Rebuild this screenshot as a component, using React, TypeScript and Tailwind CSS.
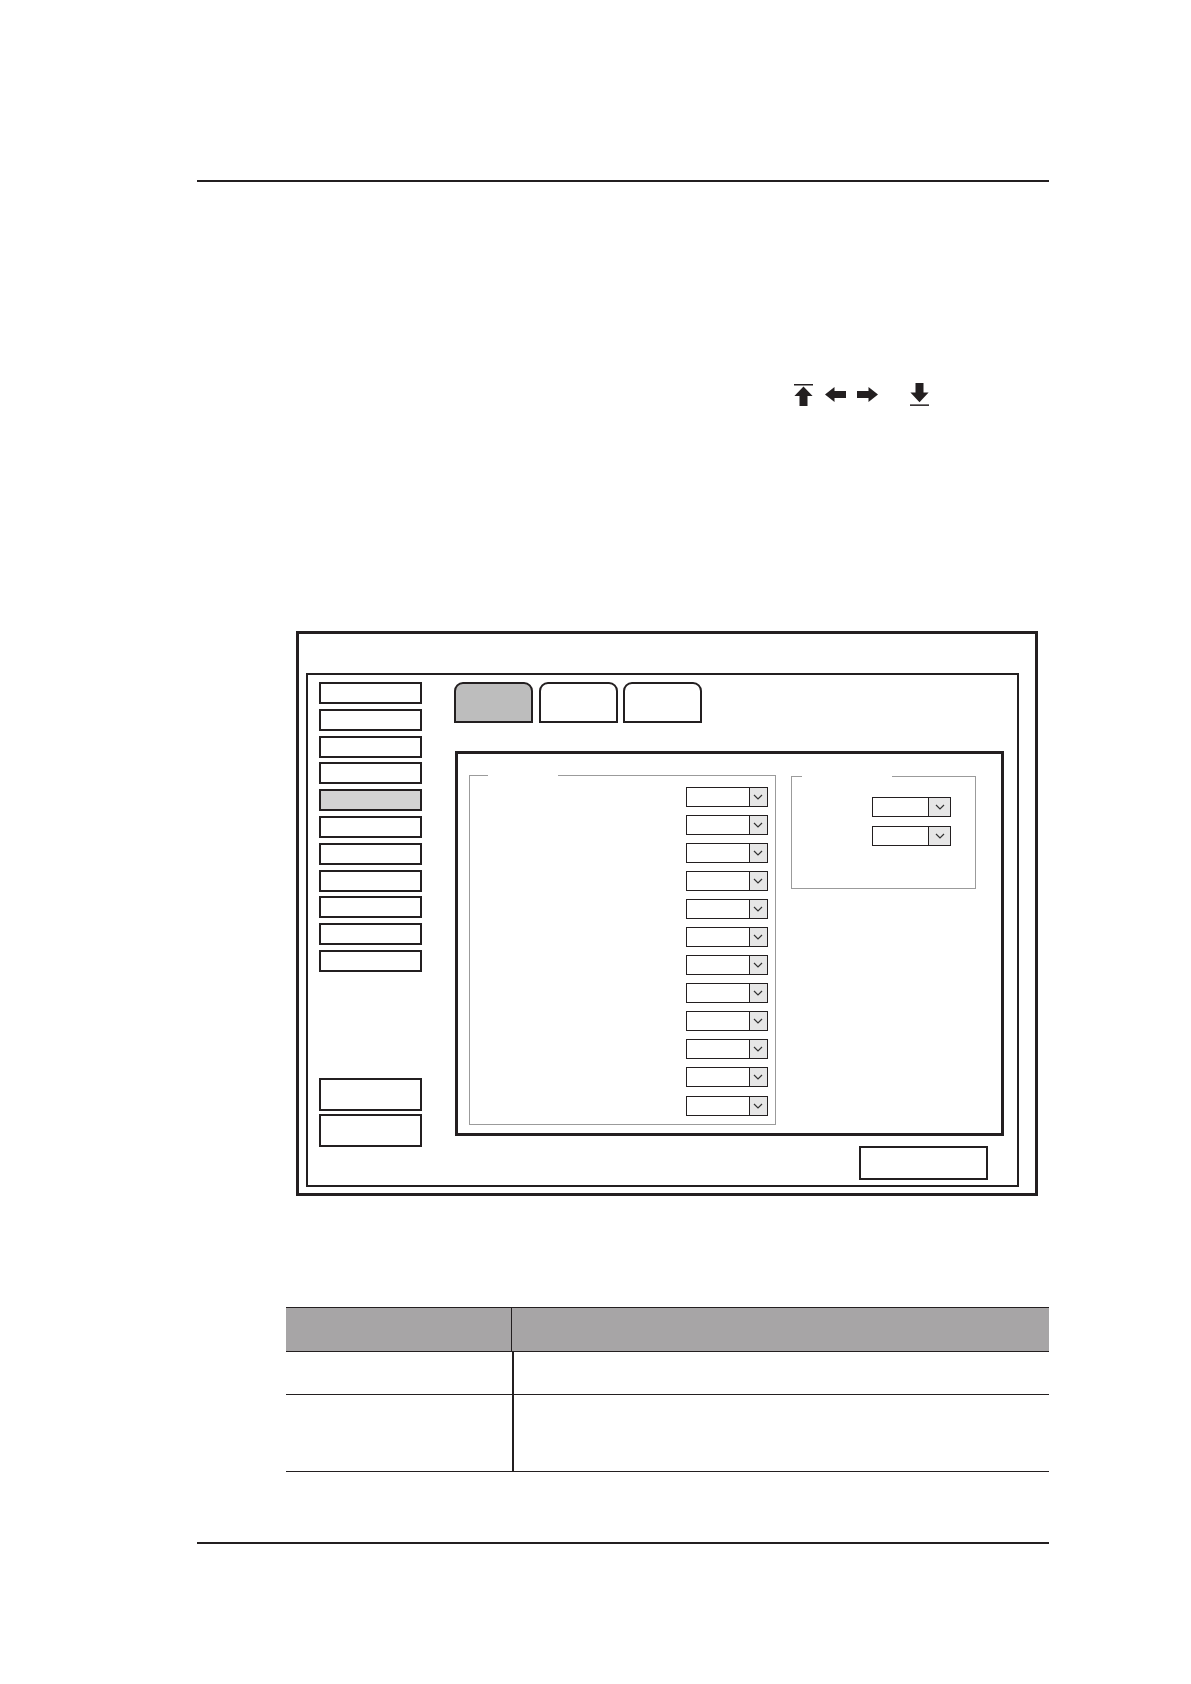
import React from 'react'

const ink = 'border-[#231f20]'

function Chevron() {
  return (
    <svg width="10" height="6" viewBox="0 0 10 6" className="block">
      <polyline points="1,1 5,5 9,1" fill="none" stroke="#333" strokeWidth="1.2" />
    </svg>
  )
}

function Dropdown({ box = 64, btn = 19, h = 20 }: { box?: number; btn?: number; h?: number }) {
  return (
    <div className="flex" style={{ height: h }}>
      <div className={`border-[1.5px] ${ink} bg-white`} style={{ width: box }} />
      <div
        className={`-ml-[1.5px] flex items-center justify-center border-[1.5px] ${ink} bg-[#e6e6e6]`}
        style={{ width: btn }}
      >
        <Chevron />
      </div>
    </div>
  )
}

function GroupBox({
  gapLeft,
  gapWidth,
  className,
  children,
}: {
  gapLeft: number
  gapWidth: number
  className: string
  children?: React.ReactNode
}) {
  return (
    <div className={`relative border-[1.5px] border-[#9b9b9b] ${className}`}>
      <span
        className="absolute -top-[2px] h-[3px] bg-white"
        style={{ left: gapLeft, width: gapWidth }}
      />
      {children}
    </div>
  )
}

function SideButton({ selected = false, h = 22 }: { selected?: boolean; h?: number }) {
  return (
    <div
      className={`w-[103px] border-2 ${ink} ${selected ? 'bg-[#d3d3d3]' : 'bg-white'}`}
      style={{ height: h }}
    />
  )
}

function Tab({ active = false }: { active?: boolean }) {
  return (
    <div
      className={`h-[41px] w-[79px] rounded-t-[9px] border-2 ${ink} ${active ? 'bg-[#bdbdbd]' : 'bg-white'}`}
    />
  )
}

function NavIcons() {
  const fill = '#231f20'
  return (
    <div className="ml-[794px] mt-[201px] flex items-center">
      {/* to top */}
      <svg width="19" height="22" viewBox="0 0 19 22">
        <rect x="0" y="0" width="19" height="1.5" fill={fill} />
        <polygon points="9.5,2.6 18.6,12 13.5,12 13.5,22 5.5,22 5.5,12 0.4,12" fill={fill} />
      </svg>
      {/* left */}
      <svg width="21" height="15" viewBox="0 0 21 15" className="ml-[12px]">
        <polygon points="0,7.5 9.5,0 9.5,4 21,4 21,11 9.5,11 9.5,15" fill={fill} />
      </svg>
      {/* right */}
      <svg width="21" height="15" viewBox="0 0 21 15" className="ml-[11px]">
        <polygon points="21,7.5 11.5,0 11.5,4 0,4 0,11 11.5,11 11.5,15" fill={fill} />
      </svg>
      {/* to bottom */}
      <svg width="19" height="23" viewBox="0 0 19 23" className="ml-[32px]">
        <polygon points="5.5,0 13.5,0 13.5,9.5 18.6,9.5 9.5,19.2 0.4,9.5 5.5,9.5" fill={fill} />
        <rect x="0" y="21.4" width="19" height="1.5" fill={fill} />
      </svg>
    </div>
  )
}

export default function App() {
  const leftDropdowns = Array.from({ length: 12 })
  const sideButtons = Array.from({ length: 11 })

  return (
    <div className="relative h-[1684px] w-[1191px] bg-white font-['Liberation_Sans',Arial,sans-serif]">
      <div className="pt-[180px]">
        <div className="ml-[197px] h-[2px] w-[852px] bg-[#231f20]" />
      </div>

      <NavIcons />

      {/* dialog */}
      <div className={`ml-[296px] mt-[225px] h-[565px] w-[742px] border-[3px] ${ink} pl-[7px] pt-[39px]`}>
        <div className={`flex h-[514px] w-[713px] border-2 ${ink}`}>
          {/* left nav */}
          <div className="ml-[11px] mt-[7px] flex flex-col">
            <div className="flex flex-col gap-[4.8px]">
              {sideButtons.map((_, i) => (
                <SideButton key={i} selected={i === 4} />
              ))}
            </div>
            <div className="mt-[106px] flex flex-col gap-[3px]">
              <SideButton h={33} />
              <SideButton h={33} />
            </div>
          </div>

          {/* right content */}
          <div className="ml-[32px] mt-[7px] flex flex-col">
            <div className="flex gap-[5.5px]">
              <Tab active />
              <Tab />
              <Tab />
            </div>

            <div className={`mt-[28px] ml-[1px] flex h-[385px] w-[549px] border-[3px] ${ink}`}>
              <GroupBox gapLeft={18} gapWidth={70} className="ml-[11px] mt-[21px] h-[350px] w-[307px]">
                <div className="flex flex-col items-end gap-[8.1px] pr-[7.5px] pt-[10.5px]">
                  {leftDropdowns.map((_, i) => (
                    <Dropdown key={i} />
                  ))}
                </div>
              </GroupBox>

              <GroupBox gapLeft={10} gapWidth={90} className="ml-[15px] mt-[22px] h-[113px] w-[185px]">
                <div className="flex flex-col items-end gap-[9px] pr-[24px] pt-[19.5px]">
                  <Dropdown box={58} btn={23} h={20} />
                  <Dropdown box={58} btn={23} h={20} />
                </div>
              </GroupBox>
            </div>

            <div className="mt-[10px] flex justify-end pr-[16px]">
              <div className={`h-[34px] w-[129px] border-[2.5px] ${ink}`} />
            </div>
          </div>
        </div>
      </div>

      {/* table */}
      <div className="ml-[286px] mt-[111px] w-[763px]">
        <div className="flex h-[45px] border-y-[1.5px] border-[#231f20] bg-[#a7a5a6]">
          <div className="w-[226px] border-r-[1.5px] border-[#231f20]" />
          <div className="flex-1" />
        </div>
        <div className="flex h-[43px] border-b-[1.5px] border-[#231f20]">
          <div className="w-[227.5px] border-r-2 border-[#231f20]" />
          <div className="flex-1" />
        </div>
        <div className="flex h-[77px] border-b-[1.5px] border-[#231f20]">
          <div className="w-[227.5px] border-r-2 border-[#231f20]" />
          <div className="flex-1" />
        </div>
      </div>

      <div className="ml-[197px] mt-[70px] h-[2px] w-[852px] bg-[#231f20]" />
    </div>
  )
}
